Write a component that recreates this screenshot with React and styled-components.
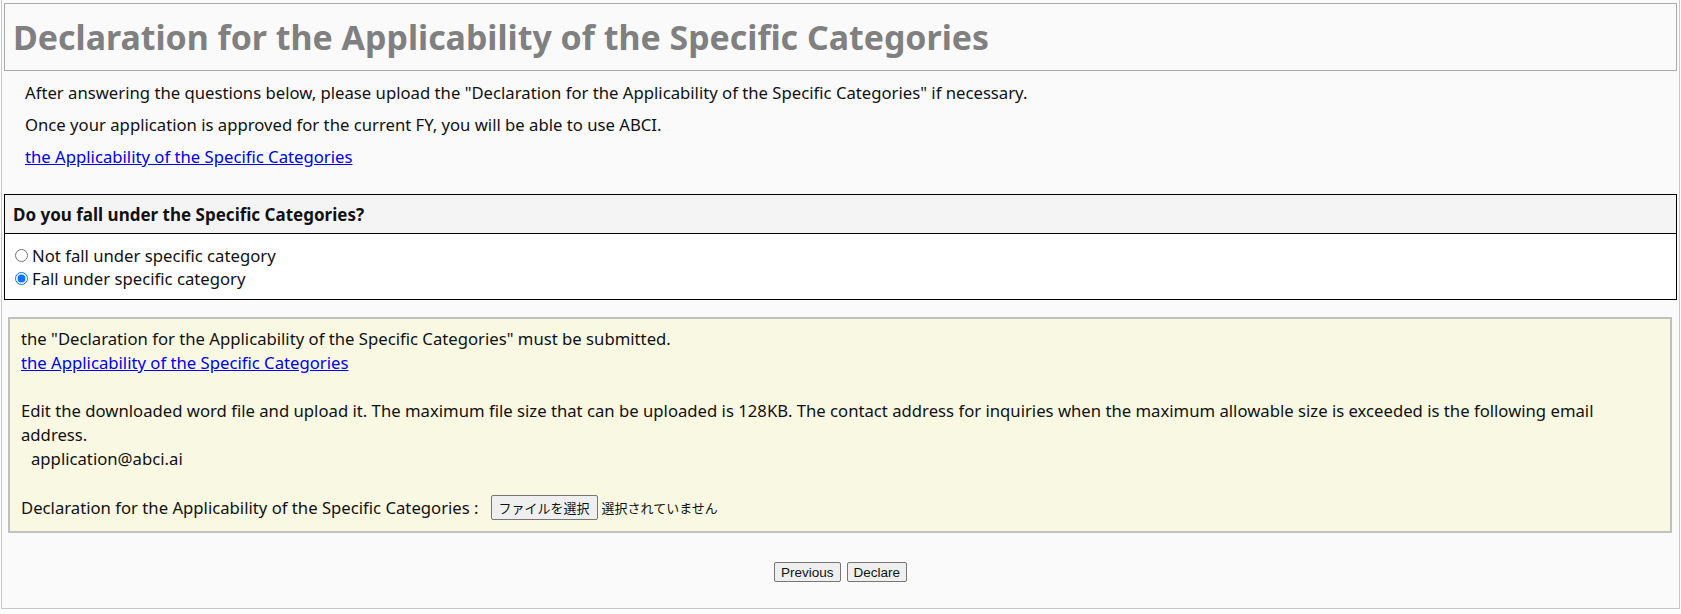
import { useState } from "react";
import styled, { createGlobalStyle } from "styled-components";

const GlobalStyle = createGlobalStyle`
  html, body {
    margin: 0;
    padding: 0;
    background: #ffffff;
  }
  body {
    font-family: "Noto Sans", "Liberation Sans", "Noto Sans CJK JP", sans-serif;
    color: #111;
  }
`;

const Page = styled.div`
  margin: 0 1px;
  min-height: 609px;
  box-sizing: border-box;
  border: 1px solid #c8c8c8;
  border-top: none;
  background: #fafafa;
  padding: 3px 2px 20px;
`;

const TitleBox = styled.div`
  height: 68px;
  box-sizing: border-box;
  border: 1px solid #aaaaaa;
  display: flex;
  align-items: center;
  padding-left: 8px;
`;

const Title = styled.h1`
  margin: 0;
  font-size: 33.9px;
  line-height: 40px;
  font-weight: bold;
  color: #808080;
`;

const Intro = styled.div`
  display: flex;
  flex-direction: column;
  gap: 12px;
  padding: 12px 0 0 21px;
  font-size: 16.7px;
  line-height: 20px;
`;

const Para = styled.p`
  margin: 0;
`;

const Link = styled.a`
  color: #0000ee;
  text-decoration: underline;
  cursor: pointer;
`;

const Question = styled.div`
  margin-top: 27px;
  border: 1px solid #000;
  background: #fff;
`;

const QuestionHead = styled.div`
  height: 39px;
  box-sizing: border-box;
  display: flex;
  align-items: center;
  padding-left: 8px;
  background: #f4f4f4;
  border-bottom: 1px solid #000;
  font-size: 17px;
  font-weight: bold;
`;

const QuestionBody = styled.div`
  padding: 10px 8px 9px 8px;
  font-size: 16.7px;
`;

const Option = styled.label`
  display: flex;
  align-items: center;
  height: 23px;
  cursor: pointer;
`;

const Radio = styled.input`
  margin: 0 4px 0 2px;
  width: 13px;
  height: 13px;
`;

const Notice = styled.div`
  margin: 17px 5px 0 4px;
  border: 2px solid #c0c0c0;
  background: #f8f8e3;
  padding: 8px 11px 11px;
  font-size: 16.7px;
  line-height: 24px;
`;

const Blank = styled.div`
  height: 24px;
`;

const Email = styled.div`
  padding-left: 10px;
`;

const FileRow = styled.div`
  display: flex;
  align-items: center;
  height: 25px;
`;

const FileButton = styled.button`
  margin-left: 12px;
  height: 25px;
  padding: 0 7px;
  font-family: "Noto Sans CJK JP", sans-serif;
  font-size: 13px;
  background: #efefef;
  border: 1px solid #767676;
  border-radius: 2px;
  color: #111;
`;

const FileState = styled.span`
  margin-left: 4px;
  font-family: "Noto Sans CJK JP", sans-serif;
  font-size: 13px;
`;

const Actions = styled.div`
  display: flex;
  justify-content: center;
  gap: 6px;
  margin-top: 29px;
`;

const ActionButton = styled.button`
  height: 20px;
  padding: 0 6px;
  font-family: "Liberation Sans", Arial, sans-serif;
  font-size: 13.5px;
  background: #efefef;
  border: 1px solid #767676;
  border-radius: 2px;
  color: #111;
`;

const DOC_TITLE = "Declaration for the Applicability of the Specific Categories";

export default function App() {
  const [answer, setAnswer] = useState("yes");

  return (
    <>
      <GlobalStyle />
      <Page>
        <TitleBox>
          <Title>{DOC_TITLE}</Title>
        </TitleBox>
        <Intro>
          <Para>
            After answering the questions below, please upload the "{DOC_TITLE}" if necessary.
          </Para>
          <Para>Once your application is approved for the current FY, you will be able to use ABCI.</Para>
          <Para>
            <Link>the Applicability of the Specific Categories</Link>
          </Para>
        </Intro>

        <Question>
          <QuestionHead>Do you fall under the Specific Categories?</QuestionHead>
          <QuestionBody>
            <Option>
              <Radio
                type="radio"
                name="specific"
                checked={answer === "no"}
                onChange={() => setAnswer("no")}
              />
              Not fall under specific category
            </Option>
            <Option>
              <Radio
                type="radio"
                name="specific"
                checked={answer === "yes"}
                onChange={() => setAnswer("yes")}
              />
              Fall under specific category
            </Option>
          </QuestionBody>
        </Question>

        {answer === "yes" && (
          <Notice>
            <div>the "{DOC_TITLE}" must be submitted.</div>
            <div>
              <Link>the Applicability of the Specific Categories</Link>
            </div>
            <Blank />
            <div>
              Edit the downloaded word file and upload it. The maximum file size that can be uploaded is
              128KB. The contact address for inquiries when the maximum allowable size is exceeded is the
              following email address.
            </div>
            <Email>application@abci.ai</Email>
            <Blank />
            <FileRow>
              {DOC_TITLE} :
              <FileButton type="button">ファイルを選択</FileButton>
              <FileState>選択されていません</FileState>
            </FileRow>
          </Notice>
        )}

        <Actions>
          <ActionButton type="button">Previous</ActionButton>
          <ActionButton type="button">Declare</ActionButton>
        </Actions>
      </Page>
    </>
  );
}
